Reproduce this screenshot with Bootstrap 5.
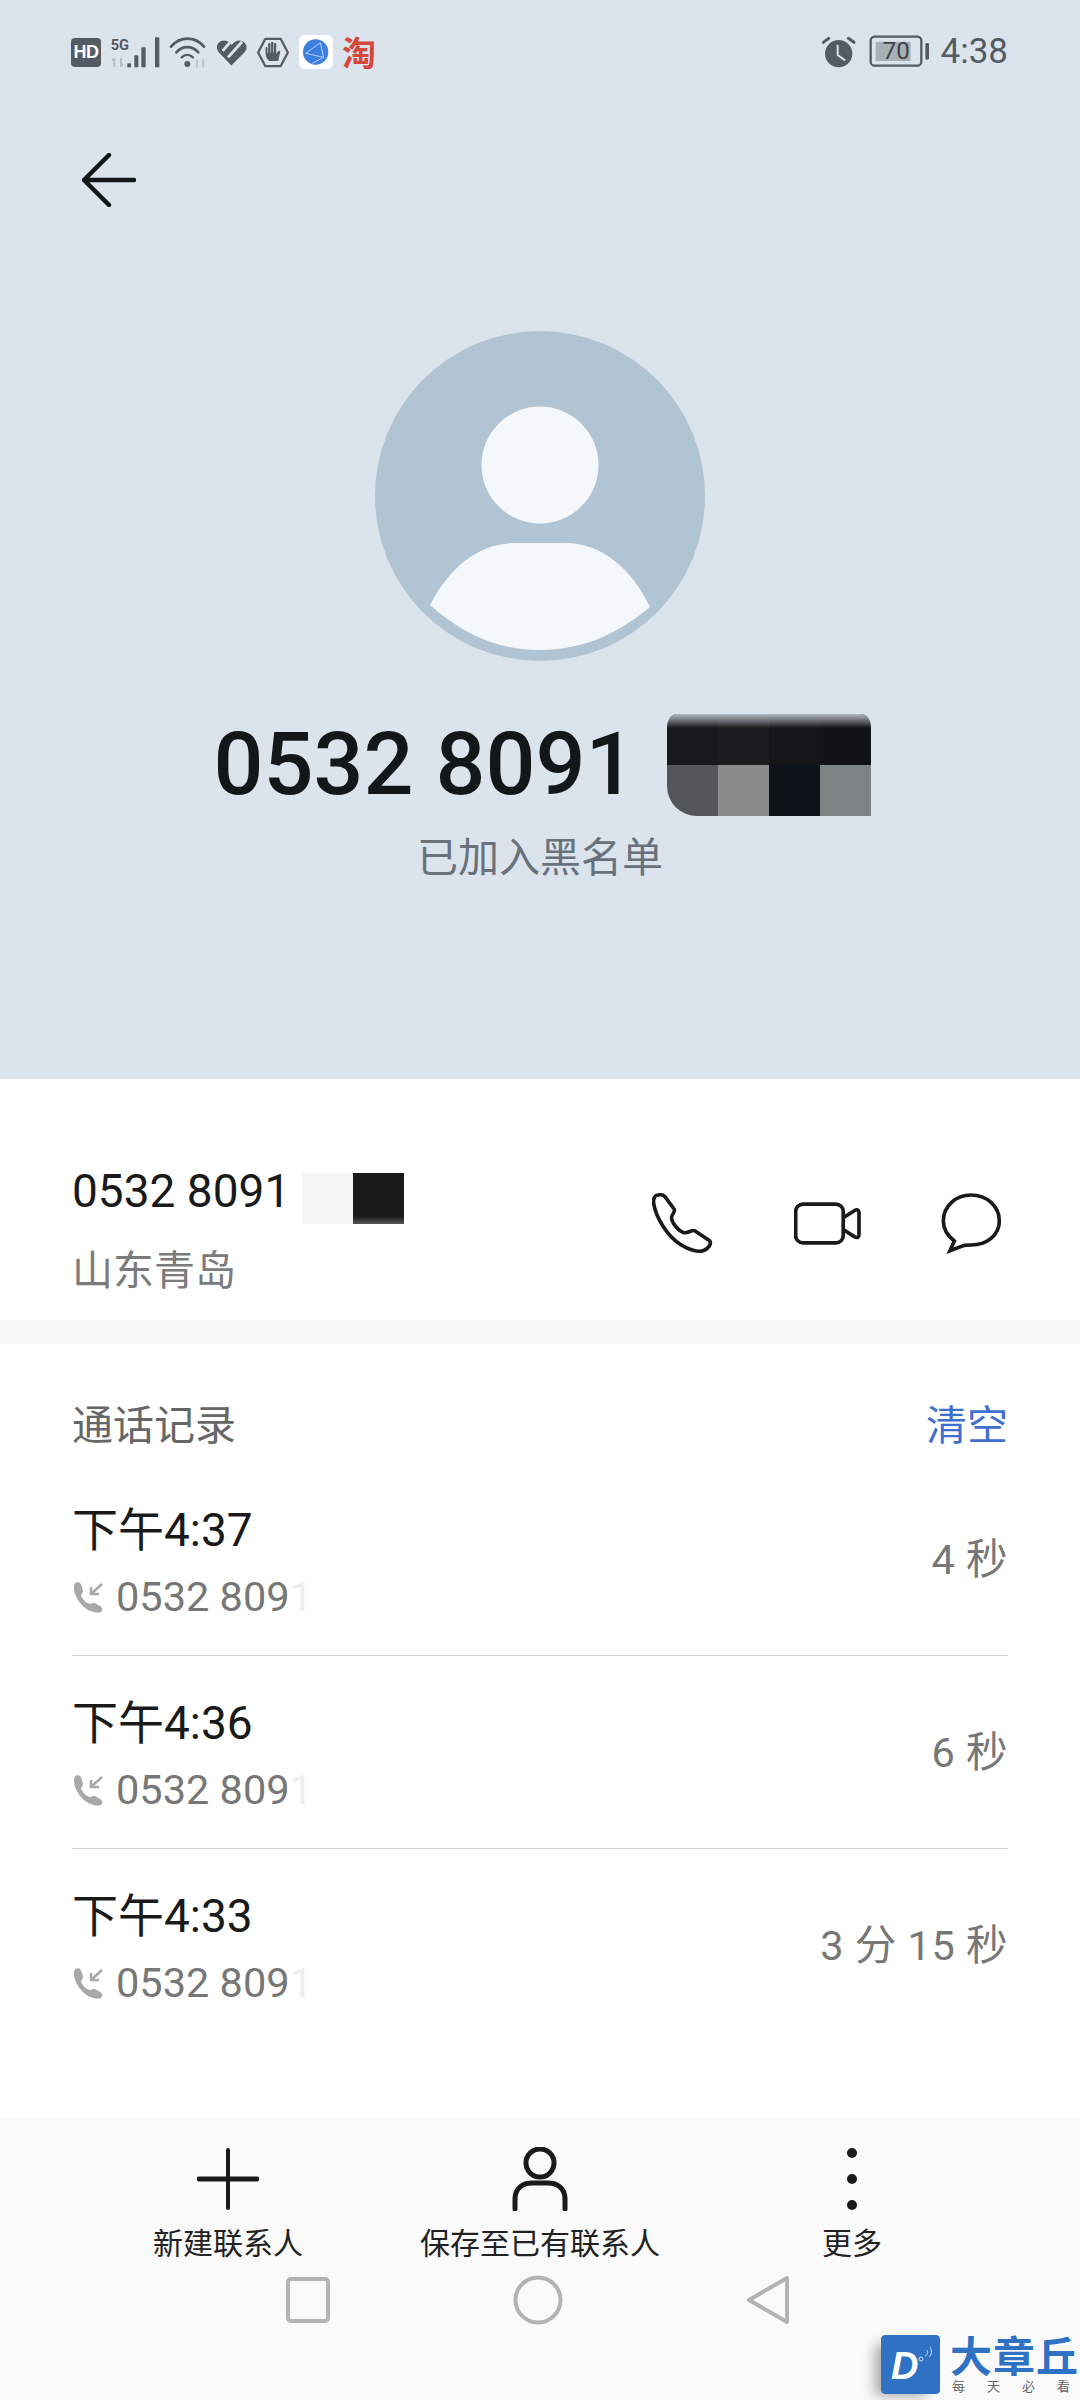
<!DOCTYPE html>
<html lang="zh">
<head>
<meta charset="utf-8">
<title>通话详情</title>
<link href="https://cdn.jsdelivr.net/npm/bootstrap@5.3.0/dist/css/bootstrap.min.css" rel="stylesheet">
<style>
html,body{margin:0;background:#fff;}
body{width:1080px;height:2400px;overflow:hidden;position:relative;font-family:Roboto,"Noto Sans CJK SC",sans-serif;color:#1a1a1a;}
svg{display:block;flex:none;}
.hero{height:1079px;background:#dbe3ed;}
.stat{padding:33px 72px 0 71px;height:71px;color:#555b63;}
.stat-l{gap:9px;}
.hd-box{width:30px;height:29px;border-radius:4px;background:#555b63;color:#fff;font:700 18px/29px "Liberation Sans",sans-serif;text-align:center;letter-spacing:-.5px;}
.tao{font:700 34px/36px "Noto Sans CJK SC",sans-serif;color:#d4473b;}
.clock{font-size:35px;line-height:38px;margin-left:10px;}
.back{margin:82px 0 0 82px;}
.avatar{margin:124px auto 0;}
.num-row{margin-top:53px;height:102px;gap:31px;padding-left:4px;}
.big-num{font-size:88px;line-height:102px;font-weight:500;color:#14171a;margin-top:-2px;}
.mosaic{display:grid;grid-template-columns:repeat(4,51px);grid-template-rows:repeat(2,51px);position:relative;border-radius:10px 10px 0 30px/14px 14px 0 30px;overflow:hidden;}
.mosaic i{display:block;}
.mosaic::after{content:"";position:absolute;left:0;right:0;top:0;height:14px;background:linear-gradient(#dbe3edcc,#dbe3ed00);}
.sub-title{font-family:"Noto Sans CJK SC",sans-serif;font-size:41px;line-height:60px;color:#69717b;margin-top:8px;}
.contact{height:241px;padding:81px 72px 0 72px;}
.c-num{font-size:46px;line-height:62px;color:#1a1a1a;}
.mask-a,.mask-b{width:51px;height:51px;margin-top:13px;}
.mask-a{background:#f5f5f5;margin-left:12px;}
.mask-b{background:linear-gradient(#1a1a1a 85%,#555);}
.c-loc{font-family:"Noto Sans CJK SC",sans-serif;font-size:41px;line-height:60px;color:#7b7b7b;margin-top:13px;}
.c-icons{margin:33px 6px 0 auto;}
.band{height:24px;background:#f7f7f7;}
.log-head{height:119px;padding:48px 72px 0 72px;font-family:"Noto Sans CJK SC",sans-serif;font-size:41px;line-height:60px;color:#666;}
.clear-link{color:#3f6fcf;}
.log{margin:0 72px;height:654px;border-radius:0;background:transparent;}
.log .list-group-item{height:193px;padding:39px 0 0;border-color:#cfcfcf;background:transparent;color:inherit;}
.log .list-group-item:last-child{border-bottom:0;}
.t-main{font-size:46px;line-height:56px;color:#1a1a1a;}
.t-sub{font-size:41.5px;line-height:56px;color:#777;margin-top:11px;gap:12px;}
.fade-1{opacity:.12;}
.dur{font-size:41.5px;line-height:56px;color:#777;margin-top:-38px;letter-spacing:.5px;}
.act-bar{height:283px;background:#fafafa;}
.acts{padding:30px 72px 0;}
.act{width:312px;text-align:center;font-family:"Noto Sans CJK SC",sans-serif;font-size:30px;line-height:36px;color:#222;}
.act-ic{height:64px;margin-bottom:12px;}
.nav3{margin-top:16px;padding:0 290px 0 286px;}
.mark-wm{position:absolute;left:881px;top:2335px;width:199px;height:65px;}
.wm-sq{position:absolute;left:0;top:0;box-shadow:-10px 6px 12px -4px #0005;border-radius:3px;}
.wm-big{position:absolute;left:69px;top:-3px;font:700 42px/44px "Noto Sans CJK SC",sans-serif;color:#2f72c4;white-space:nowrap;letter-spacing:1px;}
.wm-small{position:absolute;left:71px;top:42px;font:400 13px/18px "Noto Sans CJK SC",sans-serif;color:#666;letter-spacing:22px;white-space:nowrap;}
</style>
</head>
<body>

<section class="hero">
  <div class="stat d-flex justify-content-between align-items-center">
    <div class="stat-l d-flex align-items-center">
      <div class="hd-box">HD</div>
      <svg width="50" height="32" viewBox="215 78 150 96">
        <text x="217" y="120" font-family="Roboto" font-weight="700" font-size="44" fill="#555b63">5G</text>
        <path d="M228 145v25M222 152l6-7M248 145v25M254 162l-6 7" stroke="#b9bdc3" stroke-width="6" fill="none"/>
        <rect x="267" y="160" width="11" height="12" fill="#555b63"/>
        <rect x="288" y="136" width="12" height="36" rx="2" fill="#555b63"/>
        <rect x="309" y="112" width="13" height="60" rx="2" fill="#555b63"/>
        <rect x="350" y="82" width="13" height="90" rx="2" fill="#555b63"/>
      </svg>
      <svg width="38" height="32" viewBox="392 78 114 96" fill="none" stroke="#555b63" stroke-linecap="round">
        <path d="M398 110C425 78 470 78 497 110" stroke-width="8"/>
        <path d="M414 127C432 106 462 106 480 127" stroke-width="8"/>
        <path d="M430 142C440 132 454 132 464 142" stroke-width="7"/>
        <circle cx="447" cy="162" r="9" fill="#555b63" stroke="none"/>
        <path d="M476 150v20M494 150v20" stroke="#b9bdc3" stroke-width="5"/>
      </svg>
      <svg width="31" height="27" viewBox="528 84 95 82">
        <path d="M575 165L537 125C522 105 537 88 552 88C562 88 570 92 576 102C586 88 600 84 612 92C626 102 624 118 612 128Z" fill="#555b63"/>
        <path d="M565 140L608 92M548 120L578 86" stroke="#dbe3ed" stroke-width="9"/>
      </svg>
      <svg width="34" height="31" viewBox="650 78 104 96">
        <path d="M678 84H726L748 126L726 168H678L656 126Z" fill="none" stroke="#555b63" stroke-width="7" stroke-linejoin="round"/>
        <path d="M679 128V112a3 3 0 0 1 6 0V128h2V100a3 3 0 0 1 7 0V126h2V96a3 3 0 0 1 7 0V126h2V100a3 3 0 0 1 7 0V130l6-8a3.500 3.500 0 0 1 6 4L718 152H692C686 150 679 140 679 128Z" fill="#555b63"/>
      </svg>
      <svg width="34" height="34" viewBox="778 75 102 102">
        <rect x="778" y="75" width="102" height="102" rx="16" fill="#fff"/>
        <circle cx="828" cy="126" r="38" fill="#3c7fe0"/>
        <path d="M798 130L842 98L852 142L818 160M798 130L852 142" stroke="#cfe0fa" stroke-width="2.500" fill="none"/>
      </svg>
      <div class="tao">淘</div>
    </div>
    <div class="d-flex align-items-center">
      <svg width="36" height="34" viewBox="143 75 108 102" class="me-2">
        <circle cx="196" cy="131" r="41" fill="#555b63"/>
        <path d="M150 97L166 85M225 85L242 97" stroke="#555b63" stroke-width="9" stroke-linecap="round"/>
        <path d="M193 107V135L214 150" stroke="#dbe3ed" stroke-width="6" fill="none" stroke-linecap="round"/>
      </svg>
      <svg width="62" height="34" viewBox="282 78 182 102" class="ms-1">
        <rect x="285" y="83" width="152" height="87" rx="12" fill="none" stroke="#555b63" stroke-width="7"/>
        <rect x="300" y="98" width="105" height="58" rx="3" fill="#a9afb7"/>
        <rect x="449" y="102" width="11" height="50" rx="4" fill="#555b63"/>
        <text x="362" y="150" text-anchor="middle" font-family="Roboto" font-size="72" fill="#3d434b">70</text>
      </svg>
      <div class="clock">4:38</div>
    </div>
  </div>

  <svg class="back" width="54" height="54" viewBox="0 0 54 54" fill="none" stroke="#14171a" stroke-width="4.500" stroke-linecap="round" stroke-linejoin="round">
    <path d="M27 2L2 27L27 52M2 27H52"/>
  </svg>

  <svg class="avatar" width="330" height="330" viewBox="0 0 330 330">
    <circle cx="165" cy="165" r="165" fill="#b1c4d4"/>
    <circle cx="165" cy="134" r="58.500" fill="#f5f8fa"/>
    <path d="M55 274C75 235 105 212 140 212H190C225 212 255 235 275 276C240 305 205 319 165 319C125 319 90 305 55 274Z" fill="#f5f8fa"/>
  </svg>

  <div class="num-row d-flex justify-content-center align-items-center">
    <div class="big-num">0532 8091</div>
    <div class="mosaic" aria-hidden="true">
      <i style="background:#17191c"></i><i style="background:#1c1d1f"></i><i style="background:#141618"></i><i style="background:#121315"></i>
      <i style="background:#53565b"></i><i style="background:#878b8a"></i><i style="background:#0d1218"></i><i style="background:#7e8483"></i>
    </div>
  </div>
  <div class="sub-title text-center">已加入黑名单</div>
</section>

<section class="contact d-flex align-items-start bg-white">
  <div>
    <div class="d-flex">
      <div class="c-num">0532 8091</div>
      <div class="mask-a"></div>
      <div class="mask-b"></div>
    </div>
    <div class="c-loc">山东青岛</div>
  </div>
  <div class="c-icons d-flex align-items-center">
    <svg width="61" height="61" viewBox="41 41 184 184" fill="none" stroke="#1a1a1a" stroke-width="11" stroke-linejoin="round">
      <path d="M60 47C50 47 44 58 46 72C52 115 90 175 130 198C150 212 180 220 195 215C210 210 222 195 215 185L170 155C160 150 150 165 135 160C120 155 100 130 100 115C100 105 112 100 108 90L80 52C75 47 68 45 60 47Z"/>
    </svg>
    <svg class="vid-ic" width="67" height="43" viewBox="465 68 200 128" fill="none" stroke="#1a1a1a" stroke-width="11" stroke-linejoin="round" style="margin-left:81px">
      <rect x="470" y="74" width="142" height="116" rx="22"/>
      <path d="M612 115L646 93Q659 87 659 100V165Q659 178 646 172L612 150"/>
    </svg>
    <svg width="61" height="61" viewBox="905 41 183 183" fill="none" stroke="#1a1a1a" stroke-width="11" stroke-linejoin="miter" style="margin-left:80px">
      <path d="M945 185C922 167 912 147 912 125C912 80 950 47 995 47C1042 47 1080 80 1080 125C1080 168 1042 197 995 197L975 198L932 214Z"/>
    </svg>
  </div>
</section>

<div class="band"></div>

<section class="bg-white">
  <div class="log-head d-flex justify-content-between">
    <span>通话记录</span>
    <span class="clear-link">清空</span>
  </div>
  <div class="log list-group list-group-flush">
    <div class="list-group-item d-flex justify-content-between align-items-center">
      <div class="align-self-start">
        <div class="t-main">下午4:37</div>
        <div class="t-sub d-flex align-items-center">
          <svg width="32" height="32" viewBox="0 0 32 32"><path d="M3 2C7 0 9 2 10 6L11 10C11 12 9 13 9 15C11 19 14 22 18 23C20 23 21 21 23 22L28 25C31 27 31 29 29 31C24 33 15 30 9 23C4 17 0 8 3 2Z" fill="#a8a8a8"/><path d="M30 3L19 13M19 6V13H27" fill="none" stroke="#a8a8a8" stroke-width="2.500"/></svg>
          <span>0532 809<span class="fade-1">1</span></span>
        </div>
      </div>
      <div class="dur">4 秒</div>
    </div>
    <div class="list-group-item d-flex justify-content-between align-items-center">
      <div class="align-self-start">
        <div class="t-main">下午4:36</div>
        <div class="t-sub d-flex align-items-center">
          <svg width="32" height="32" viewBox="0 0 32 32"><path d="M3 2C7 0 9 2 10 6L11 10C11 12 9 13 9 15C11 19 14 22 18 23C20 23 21 21 23 22L28 25C31 27 31 29 29 31C24 33 15 30 9 23C4 17 0 8 3 2Z" fill="#a8a8a8"/><path d="M30 3L19 13M19 6V13H27" fill="none" stroke="#a8a8a8" stroke-width="2.500"/></svg>
          <span>0532 809<span class="fade-1">1</span></span>
        </div>
      </div>
      <div class="dur">6 秒</div>
    </div>
    <div class="list-group-item d-flex justify-content-between align-items-center">
      <div class="align-self-start">
        <div class="t-main">下午4:33</div>
        <div class="t-sub d-flex align-items-center">
          <svg width="32" height="32" viewBox="0 0 32 32"><path d="M3 2C7 0 9 2 10 6L11 10C11 12 9 13 9 15C11 19 14 22 18 23C20 23 21 21 23 22L28 25C31 27 31 29 29 31C24 33 15 30 9 23C4 17 0 8 3 2Z" fill="#a8a8a8"/><path d="M30 3L19 13M19 6V13H27" fill="none" stroke="#a8a8a8" stroke-width="2.500"/></svg>
          <span>0532 809<span class="fade-1">1</span></span>
        </div>
      </div>
      <div class="dur">3 分 15 秒</div>
    </div>
  </div>
</section>

<section class="act-bar">
  <div class="acts d-flex">
    <div class="act">
      <svg class="act-ic mx-auto" width="62" height="64" viewBox="0 0 62 64" fill="none" stroke="#1a1a1a" stroke-linecap="round">
        <path d="M31 3V61" stroke-width="4"/><path d="M2 32H60" stroke-width="5"/>
      </svg>
      新建联系人
    </div>
    <div class="act">
      <svg class="act-ic mx-auto" width="56" height="64" viewBox="0 0 56 64" fill="none" stroke="#1a1a1a" stroke-width="5" stroke-linecap="round">
        <ellipse cx="28" cy="16" rx="14" ry="14"/>
        <path d="M3 62V52C3 41 11 36 20 36H36C45 36 53 41 53 52V62"/>
      </svg>
      保存至已有联系人
    </div>
    <div class="act">
      <svg class="act-ic mx-auto" width="12" height="64" viewBox="0 0 12 64" fill="#1a1a1a">
        <circle cx="6" cy="6" r="5"/><circle cx="6" cy="32" r="5"/><circle cx="6" cy="58" r="5"/>
      </svg>
      更多
    </div>
  </div>
  <div class="nav3 d-flex justify-content-between align-items-center">
    <svg width="44" height="46" viewBox="0 0 44 46"><rect x="2" y="2" width="40" height="42" rx="3" fill="none" stroke="#b3b3b3" stroke-width="4"/></svg>
    <svg width="50" height="50" viewBox="0 0 50 50"><circle cx="25" cy="25" r="22.500" fill="none" stroke="#b3b3b3" stroke-width="4"/></svg>
    <svg width="44" height="50" viewBox="0 0 44 50"><path d="M41 3V47L3 25Z" fill="none" stroke="#b3b3b3" stroke-width="4" stroke-linejoin="round"/></svg>
  </div>
</section>

<div class="mark-wm">
  <svg class="wm-sq" width="59" height="59" viewBox="0 0 59 59">
    <rect width="59" height="59" rx="4" fill="#2f72c4"/>
    <text x="10" y="44" font-family="Liberation Sans" font-style="italic" font-weight="700" font-size="38" fill="#fff">D</text>
    <circle cx="40" cy="24" r="2" fill="none" stroke="#cfe0fa"/>
    <path d="M44 21C47 20 47 17 46 15M48 22C51 20 51 15 49 12" fill="none" stroke="#cfe0fa"/>
  </svg>
  <div class="wm-big">大章丘</div>
  <div class="wm-small">每天必看</div>
</div>

<script src="https://cdn.jsdelivr.net/npm/bootstrap@5.3.0/dist/js/bootstrap.bundle.min.js"></script>
</body>
</html>
